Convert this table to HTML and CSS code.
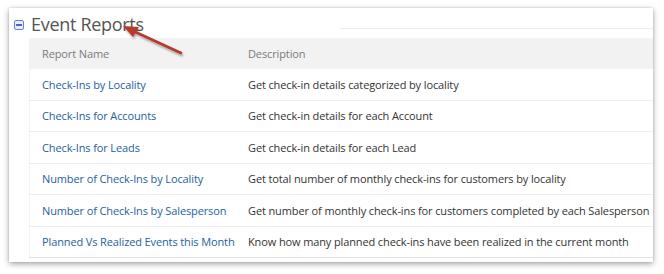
FILE: index.html
```html
<!DOCTYPE html>
<html>
<head>
<meta charset="utf-8">
<link rel="stylesheet" href="styles.css">
</head>
<body>
<div class="page">
  <div class="card">
    <div class="section-head">
      <span class="toggle"><span class="toggle-bar"></span></span>
      <span class="title">Event Reports</span>
      <span class="head-line"></span>
    </div>
    <table class="reports">
      <thead>
        <tr><th class="c1">Report Name</th><th class="c2">Description</th></tr>
      </thead>
      <tbody>
        <tr><td class="c1"><a>Check-Ins by Locality</a></td><td class="c2">Get check-in details categorized by locality</td></tr>
        <tr><td class="c1"><a>Check-Ins for Accounts</a></td><td class="c2">Get check-in details for each Account</td></tr>
        <tr><td class="c1"><a>Check-Ins for Leads</a></td><td class="c2">Get check-in details for each Lead</td></tr>
        <tr><td class="c1"><a>Number of Check-Ins by Locality</a></td><td class="c2">Get total number of monthly check-ins for customers by locality</td></tr>
        <tr><td class="c1"><a>Number of Check-Ins by Salesperson</a></td><td class="c2">Get number of monthly check-ins for customers completed by each Salesperson</td></tr>
        <tr class="last"><td class="c1"><a>Planned Vs Realized Events this Month</a></td><td class="c2">Know how many planned check-ins have been realized in the current month</td></tr>
      </tbody>
    </table>
    <svg class="arrow" width="70" height="36" viewBox="0 0 70 36">
      <defs>
        <filter id="sh" x="-20%" y="-20%" width="150%" height="160%">
          <feDropShadow dx="1" dy="2" stdDeviation="1.2" flood-color="#000" flood-opacity="0.35"/>
        </filter>
      </defs>
      <g filter="url(#sh)">
        <line x1="62" y1="30" x2="12" y2="7" stroke="#b73a2b" stroke-width="2.6" stroke-linecap="round"/>
        <polygon points="4,3 20,4 14,14" fill="#b73a2b"/>
      </g>
    </svg>
  </div>
</div>
</body>
</html>
```

FILE: styles.css
```css
html, body {
  margin: 0;
  padding: 0;
  background: #ffffff;
}
.page {
  padding: 8px 11px 12px 9px;
}
.card {
  position: relative;
  background: #ffffff;
  height: 254px;
  box-shadow: 0 2px 6px rgba(0, 0, 0, 0.35), 0 0 2px rgba(0, 0, 0, 0.15);
  font-family: "Open Sans", "Liberation Sans", sans-serif;
}
.section-head {
  display: flex;
  align-items: center;
  height: 20px;
  padding: 6px 0 0 5px;
}
.toggle {
  width: 8px;
  height: 8px;
  border: 1px solid #6b7fd3;
  border-radius: 2px;
  background: #e9ecfa;
  display: flex;
  align-items: center;
  justify-content: center;
  margin-right: 7px;
  margin-top: 1px;
}
.toggle-bar {
  width: 6px;
  height: 2px;
  background: #4f63c5;
}
.title {
  font-size: 18px;
  color: #555555;
  letter-spacing: -0.3px;
  line-height: 20px;
}
.head-line {
  margin-left: auto;
  align-self: flex-end;
  width: 313px;
  border-bottom: 1px solid #ececec;
  margin-bottom: 5px;
}
.reports {
  margin: 4px 0 0 20px;
  width: calc(100% - 20px);
  border-collapse: collapse;
  font-size: 11px;
  letter-spacing: -0.12px;
  border-left: 1px solid #f2f2f2;
  white-space: nowrap;
}
.reports th {
  background: #f2f2f2;
  color: #7a7a7a;
  font-weight: normal;
  text-align: left;
  height: 31px;
  padding: 0;
}
.reports td {
  height: 30.5px;
  padding: 0;
  border-bottom: 1px solid #ededed;
  color: #333333;
}
.reports .c1 {
  width: 199px;
  padding-left: 12px;
}
.reports .c2 {
  padding-left: 7px;
}
.reports a {
  color: #23619f;
}
.reports tr.last td {
  border-bottom-color: #e2e2e2;
}
.arrow {
  position: absolute;
  left: 110px;
  top: 15px;
}
```
